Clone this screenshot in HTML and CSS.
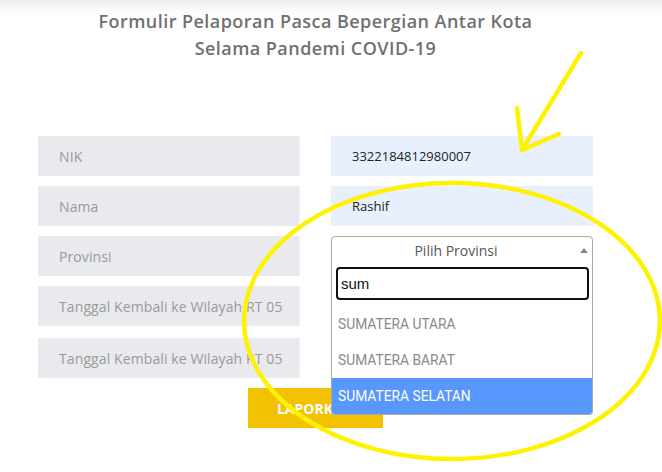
FILE: index.html
```html
<!DOCTYPE html>
<html lang="id">
<head>
<meta charset="utf-8">
<title>Formulir Pelaporan</title>
<link rel="stylesheet" href="styles.css">
</head>
<body>
<div class="page">
  <h1 class="title">Formulir Pelaporan Pasca Bepergian Antar Kota<br>Selama Pandemi COVID-19</h1>
  <form class="form">
    <div class="label-box">NIK</div>
    <div class="value-box">3322184812980007</div>
    <div class="label-box">Nama</div>
    <div class="value-box">Rashif</div>
    <div class="label-box">Provinsi</div>
    <div class="select-wrap">
      <div class="select">
        <span class="select-text">Pilih Provinsi</span>
        <span class="select-arrow"></span>
      </div>
      <div class="dropdown">
        <div class="search-wrap"><div class="search">sum</div></div>
        <ul class="options">
          <li class="option">SUMATERA UTARA</li>
          <li class="option">SUMATERA BARAT</li>
          <li class="option option-active">SUMATERA SELATAN</li>
        </ul>
      </div>
    </div>
    <div class="label-box">Tanggal Kembali ke Wilayah RT 05</div>
    <div class="empty-cell"></div>
    <div class="label-box row-5">Tanggal Kembali ke Wilayah RT 05</div>
    <div class="empty-cell row-5"></div>
    <div class="actions">
      <button type="button" class="btn">LAPORKAN</button>
    </div>
  </form>
</div>
<svg class="annot" width="662" height="472" viewBox="0 0 662 472">
  <g fill="none" stroke="#fff200" stroke-width="4.5" stroke-linecap="round" stroke-linejoin="round">
    <path d="M581 53 L522 150"/>
    <path d="M517 108 L522 150 L559 134"/>
    <ellipse cx="452" cy="321" rx="208" ry="138"/>
  </g>
</svg>
</body>
</html>
```

FILE: styles.css
```css
html, body {
  margin: 0;
  padding: 0;
}
body {
  background: linear-gradient(#efefef 0, #ffffff 14px) no-repeat, #ffffff;
  font-family: "Open Sans", "Noto Sans", sans-serif;
  width: 662px;
  height: 472px;
  overflow: hidden;
  position: relative;
}
.page {
  width: 555px;
  margin-left: 38px;
  padding-top: 8px;
}
.title {
  margin: 0;
  text-align: center;
  font-size: 18px;
  font-weight: 600;
  letter-spacing: 0.45px;
  line-height: 27px;
  color: #707070;
}
.form {
  margin-top: 74px;
  display: grid;
  grid-template-columns: 262px 262px;
  column-gap: 31px;
  row-gap: 10px;
}
.label-box, .value-box, .empty-cell {
  height: 40px;
  box-sizing: border-box;
  display: flex;
  align-items: center;
  padding-left: 21px;
  font-size: 13px;
}
.label-box {
  background: #e8eaed;
  border-right: 1px solid #f3f4f6;
  color: #9a9a9a;
  font-size: 14px;
  letter-spacing: 0.1px;
}
.value-box {
  background: #e8f0fe;
  color: #222;
  padding-left: 21px;
}
.row-5 {
  margin-top: 2px;
}
.select-wrap {
  position: relative;
  height: 40px;
}
.select {
  height: 28px;
  box-sizing: border-box;
  border: 1px solid #aaa;
  border-radius: 4px 4px 0 0;
  display: flex;
  align-items: center;
  justify-content: center;
  padding-right: 12px;
  position: relative;
  background: #fff;
}
.select-text {
  font-size: 14px;
  color: #555;
}
.select-arrow {
  position: absolute;
  right: 4px;
  top: 11px;
  width: 0;
  height: 0;
  border-style: solid;
  border-width: 0 4px 5px 4px;
  border-color: transparent transparent #888 transparent;
}
.dropdown {
  position: absolute;
  left: 0;
  top: 27px;
  width: 262px;
  box-sizing: border-box;
  border: 1px solid #aaa;
  border-top: none;
  border-radius: 0 0 4px 4px;
  background: #fff;
  z-index: 5;
  overflow: hidden;
}
.search-wrap {
  padding: 4px 3px 6px 4px;
}
.search {
  height: 33px;
  box-sizing: border-box;
  border: 2px solid #111;
  border-radius: 4px;
  display: flex;
  align-items: center;
  padding-left: 3px;
  font-family: "Liberation Sans", Arial, sans-serif;
  font-size: 15px;
  color: #111;
}
.options {
  list-style: none;
  margin: 0;
  padding: 0;
}
.option {
  height: 36px;
  display: flex;
  align-items: center;
  padding-left: 6px;
  font-family: Roboto, "Liberation Sans", sans-serif;
  font-size: 13.8px;
  color: #8a8a8a;
}
.option-active {
  background: #5897fb;
  color: #fff;
}
.actions {
  grid-column: 1 / 3;
  display: flex;
  justify-content: center;
}
.btn {
  width: 135px;
  height: 40px;
  border: none;
  background: #f2c200;
  color: #fff;
  font-family: "Open Sans", sans-serif;
  font-weight: 700;
  font-size: 14px;
  margin-top: 0;
}
.annot {
  position: absolute;
  left: 0;
  top: 0;
  pointer-events: none;
  z-index: 10;
}
```
